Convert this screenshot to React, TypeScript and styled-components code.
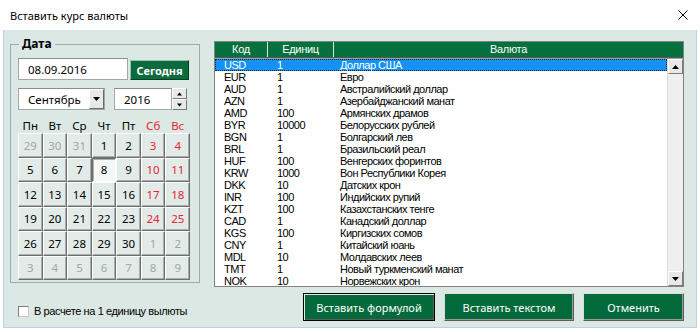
import React from "react";
import styled, { createGlobalStyle, css } from "styled-components";

const Global = createGlobalStyle`
  html, body { margin: 0; padding: 0; background: #ffffff; }
  body { width: 700px; height: 332px; overflow: hidden; font-family: "Noto Sans", "Open Sans", sans-serif; }
  * { box-sizing: border-box; }
`;

const Window = styled.div`
  width: 700px;
  height: 332px;
  display: flex;
  flex-direction: column;
  background: #ffffff;
`;

const TitleBar = styled.div`
  height: 30px;
  flex: none;
  display: flex;
  align-items: center;
  justify-content: space-between;
  padding: 0 12px 0 10px;
  font-size: 11px;
  color: #000;
`;

const Client = styled.div`
  margin: 0 3px;
  height: 298px;
  background: #dbe8e4;
  border: 1px solid #b9d0e6;
  border-top: none;
  display: flex;
  gap: 14px;
  padding: 6px 12px 0 6px;
`;

const LeftCol = styled.div`
  width: 190px;
  display: flex;
  flex-direction: column;
`;

const RightCol = styled.div`
  width: 470px;
  display: flex;
  flex-direction: column;
`;

const Group = styled.fieldset`
  margin: 0;
  padding: 6px 0 2px 7px;
  width: 190px;
  border: 1px solid #a3a9a7;
  border-radius: 0;
  min-width: 0;
`;

const Legend = styled.legend`
  padding: 0 3px;
  margin-left: 1px;
  font-size: 12px;
  line-height: 16px;
  font-weight: 700;
  color: #000;
`;

const Row = styled.div<{ $mt?: number; $gap: number }>`
  display: flex;
  align-items: flex-end;
  gap: ${(p) => p.$gap}px;
  margin-top: ${(p) => p.$mt ?? 0}px;
`;

const TextBox = styled.div<{ $w: number }>`
  position: relative;
  width: ${(p) => p.$w}px;
  height: 22px;
  background: #ffffff;
  border: 1px solid #a6a6a6;
  border-top-color: #8c8c8c;
  display: flex;
  align-items: center;
  padding-left: 9px;
  font-size: 11.5px;
  color: #000;
`;

const TodayButton = styled.div`
  width: 59px;
  height: 20px;
  background: #0a6b3e;
  border: 1px solid;
  border-color: #9cbfae #073d24 #073d24 #9cbfae;
  color: #ffffff;
  font-size: 11px;
  font-weight: 700;
  display: flex;
  align-items: center;
  justify-content: center;
`;

const DropArrow = styled.div`
  position: absolute;
  right: 0;
  top: 0;
  width: 15px;
  height: 20px;
  background: #e8e8e8;
  border: 1px solid;
  border-color: #ffffff #6b6b6b #6b6b6b #ffffff;
  display: flex;
  align-items: center;
  justify-content: center;
`;

const Spinner = styled.div`
  width: 15px;
  height: 22px;
  display: flex;
  flex-direction: column;
`;

const SpinBtn = styled.div`
  flex: 1;
  background: #e8e8e8;
  border: 1px solid;
  border-color: #ffffff #7a7a7a #7a7a7a #ffffff;
  display: flex;
  align-items: center;
  justify-content: center;
`;

const YearGroup = styled.div`
  display: flex;
`;

const DayNames = styled.div`
  margin-top: 9px;
  width: 172px;
  height: 14px;
  display: grid;
  grid-template-columns: repeat(7, 1fr);
`;

const DayName = styled.div<{ $red?: boolean }>`
  text-align: center;
  font-size: 11.5px;
  line-height: 14px;
  color: ${(p) => (p.$red ? "#e3262f" : "#000")};
`;

const Grid = styled.div`
  width: 172px;
  height: 147px;
  display: grid;
  grid-template-columns: repeat(7, 1fr);
  grid-template-rows: repeat(6, 1fr);
`;

type Kind = "n" | "w" | "o";

const Cell = styled.div<{ $kind: Kind; $sel?: boolean }>`
  display: flex;
  align-items: center;
  justify-content: center;
  font-size: 11.5px;
  background: #e2ebe8;
  border: 1px solid;
  border-color: #ffffff #6e6e6e #6e6e6e #ffffff;
  box-shadow: inset -1px -1px 0 #a9afad;
  color: ${(p) => (p.$kind === "w" ? "#e3262f" : p.$kind === "o" ? "#a2a6a5" : "#000")};
  ${(p) =>
    p.$sel &&
    css`
      background: #f6f8f7;
      border-color: #6e6e6e #ffffff #ffffff #6e6e6e;
      box-shadow: inset 1px 1px 0 #a9afad;
    `}
`;

const CheckRow = styled.label`
  margin: 22px 0 0 8px;
  display: flex;
  align-items: center;
  gap: 5px;
  font-family: "Liberation Sans", Arial, sans-serif;
  font-size: 11px;
  letter-spacing: -0.4px;
  color: #000;
`;

const CheckBox = styled.span`
  width: 11px;
  height: 11px;
  background: #ffffff;
  border: 1px solid;
  border-color: #7d7d7d #c8c8c8 #c8c8c8 #7d7d7d;
`;

const ListFrame = styled.div`
  margin-top: 5px;
  width: 470px;
  height: 246px;
  border: 1px solid #7f8482;
  display: flex;
  flex-direction: column;
  background: #ffffff;
  font-family: "Liberation Sans", Arial, sans-serif;
  font-size: 11px;
`;

const Header = styled.div`
  height: 16px;
  flex: none;
  background: #06703e;
  border-bottom: 1px solid #4e5a55;
  display: grid;
  grid-template-columns: 53px 66px 1fr;
`;

const HeadCell = styled.div<{ $sep?: boolean }>`
  color: #ffffff;
  text-align: center;
  line-height: 15px;
  letter-spacing: -0.3px;
  border-right: ${(p) => (p.$sep ? "1px solid #d5e6dc" : "none")};
`;

const Body = styled.div`
  flex: 1;
  display: flex;
  border-top: 1px solid #a0a0a0;
  overflow: hidden;
`;

const Rows = styled.div`
  flex: 1;
  overflow: hidden;
`;

const ListRow = styled.div<{ $sel?: boolean }>`
  height: 12px;
  display: grid;
  grid-template-columns: 53px 63px 1fr;
  line-height: 12px;
  letter-spacing: -0.5px;
  color: #000;
  white-space: nowrap;
  ${(p) =>
    p.$sel &&
    css`
      background: #1592f4;
      color: #ffffff;
      outline: 1px dotted #1b2a3a;
      outline-offset: -1px;
    `}
`;

const ListCell = styled.div`
  padding-left: 9px;
  overflow: hidden;
`;

const ScrollBar = styled.div`
  width: 16px;
  display: flex;
  flex-direction: column;
  justify-content: space-between;
  background: #efefef;
  border-left: 1px solid #dcdcdc;
`;

const ScrollBtn = styled.div`
  height: 15px;
  background: #e8e8e8;
  border: 1px solid;
  border-color: #ffffff #7a7a7a #7a7a7a #ffffff;
  display: flex;
  align-items: center;
  justify-content: center;
`;

const Buttons = styled.div`
  margin-top: 6px;
  display: flex;
  justify-content: flex-end;
  gap: 9px;
`;

const ActionButton = styled.div<{ $w: number; $default?: boolean }>`
  width: ${(p) => p.$w}px;
  height: 28px;
  background: #036b3b;
  color: #ffffff;
  font-size: 11px;
  display: flex;
  align-items: center;
  justify-content: center;
  border: 1px solid;
  ${(p) =>
    p.$default
      ? css`
          border-color: #000000;
          box-shadow: inset 1px 1px 0 #e6e6e6, inset -1px -1px 0 #5d5d5d;
        `
      : css`
          border-color: #dcdcdc #5d5d5d #5d5d5d #dcdcdc;
          box-shadow: inset -1px -1px 0 #9a9a9a;
        `}
`;

const Tri = ({ up, w = 7 }: { up?: boolean; w?: number }) => (
  <svg width={w} height={4} viewBox="0 0 7 4">
    {up ? <polygon points="0,4 7,4 3.5,0" fill="#000" /> : <polygon points="0,0 7,0 3.5,4" fill="#000" />}
  </svg>
);

const weeks: [string, Kind, boolean?][][] = [
  [["29", "o"], ["30", "o"], ["31", "o"], ["1", "n"], ["2", "n"], ["3", "w"], ["4", "w"]],
  [["5", "n"], ["6", "n"], ["7", "n"], ["8", "n", true], ["9", "n"], ["10", "w"], ["11", "w"]],
  [["12", "n"], ["13", "n"], ["14", "n"], ["15", "n"], ["16", "n"], ["17", "w"], ["18", "w"]],
  [["19", "n"], ["20", "n"], ["21", "n"], ["22", "n"], ["23", "n"], ["24", "w"], ["25", "w"]],
  [["26", "n"], ["27", "n"], ["28", "n"], ["29", "n"], ["30", "n"], ["1", "o"], ["2", "o"]],
  [["3", "o"], ["4", "o"], ["5", "o"], ["6", "o"], ["7", "o"], ["8", "o"], ["9", "o"]],
];

const currencies: [string, string, string][] = [
  ["USD", "1", "Доллар США"],
  ["EUR", "1", "Евро"],
  ["AUD", "1", "Австралийский доллар"],
  ["AZN", "1", "Азербайджанский манат"],
  ["AMD", "100", "Армянских драмов"],
  ["BYR", "10000", "Белорусских рублей"],
  ["BGN", "1", "Болгарский лев"],
  ["BRL", "1", "Бразильский реал"],
  ["HUF", "100", "Венгерских форинтов"],
  ["KRW", "1000", "Вон Республики Корея"],
  ["DKK", "10", "Датских крон"],
  ["INR", "100", "Индийских рупий"],
  ["KZT", "100", "Казахстанских тенге"],
  ["CAD", "1", "Канадский доллар"],
  ["KGS", "100", "Киргизских сомов"],
  ["CNY", "1", "Китайский юань"],
  ["MDL", "10", "Молдавских леев"],
  ["TMT", "1", "Новый туркменский манат"],
  ["NOK", "10", "Норвежских крон"],
];

const dayNames: [string, boolean][] = [
  ["Пн", false], ["Вт", false], ["Ср", false], ["Чт", false], ["Пт", false], ["Сб", true], ["Вс", true],
];

export default function App() {
  return (
    <>
      <Global />
      <Window>
        <TitleBar>
          <span>Вставить курс валюты</span>
          <svg width="10" height="10" viewBox="0 0 10 10">
            <path d="M0.5 0.5 L9.5 9.5 M9.5 0.5 L0.5 9.5" stroke="#000" strokeWidth="1" />
          </svg>
        </TitleBar>
        <Client>
          <LeftCol>
            <Group>
              <Legend>Дата</Legend>
              <Row $gap={2}>
                <TextBox $w={110}>08.09.2016</TextBox>
                <TodayButton>Сегодня</TodayButton>
              </Row>
              <Row $gap={9} $mt={8}>
                <TextBox $w={87}>
                  Сентябрь
                  <DropArrow>
                    <Tri />
                  </DropArrow>
                </TextBox>
                <YearGroup>
                  <TextBox $w={58}>2016</TextBox>
                  <Spinner>
                    <SpinBtn>
                      <Tri up w={5} />
                    </SpinBtn>
                    <SpinBtn>
                      <Tri w={5} />
                    </SpinBtn>
                  </Spinner>
                </YearGroup>
              </Row>
              <DayNames>
                {dayNames.map(([d, r]) => (
                  <DayName key={d} $red={r}>
                    {d}
                  </DayName>
                ))}
              </DayNames>
              <Grid>
                {weeks.flat().map(([d, k, s], i) => (
                  <Cell key={i} $kind={k} $sel={s}>
                    {d}
                  </Cell>
                ))}
              </Grid>
            </Group>
            <CheckRow>
              <CheckBox />
              В расчете на 1 единицу вылюты
            </CheckRow>
          </LeftCol>
          <RightCol>
            <ListFrame>
              <Header>
                <HeadCell $sep>Код</HeadCell>
                <HeadCell $sep>Единиц</HeadCell>
                <HeadCell>Валюта</HeadCell>
              </Header>
              <Body>
                <Rows>
                  {currencies.map(([c, u, n], i) => (
                    <ListRow key={c} $sel={i === 0}>
                      <ListCell>{c}</ListCell>
                      <ListCell>{u}</ListCell>
                      <ListCell>{n}</ListCell>
                    </ListRow>
                  ))}
                </Rows>
                <ScrollBar>
                  <ScrollBtn>
                    <Tri up />
                  </ScrollBtn>
                  <ScrollBtn>
                    <Tri />
                  </ScrollBtn>
                </ScrollBar>
              </Body>
            </ListFrame>
            <Buttons>
              <ActionButton $w={132} $default>
                Вставить формулой
              </ActionButton>
              <ActionButton $w={130}>Вставить текстом</ActionButton>
              <ActionButton $w={101}>Отменить</ActionButton>
            </Buttons>
          </RightCol>
        </Client>
      </Window>
    </>
  );
}
